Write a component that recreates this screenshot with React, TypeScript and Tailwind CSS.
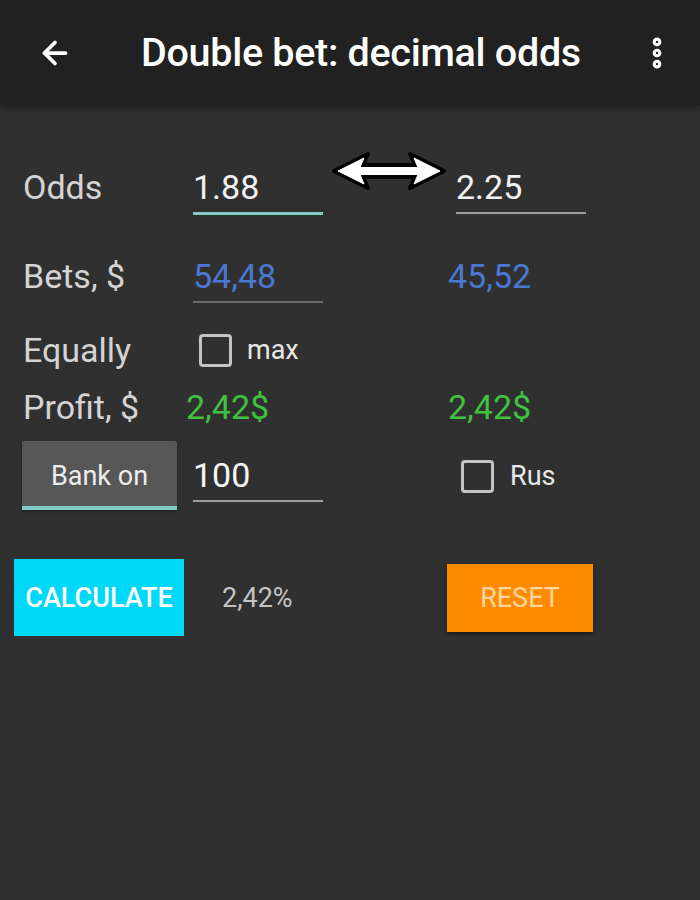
import { ArrowLeft, EllipsisVertical } from 'lucide-react'

const font = { fontFamily: 'Roboto, "Noto Sans", sans-serif' }

function SwapArrow() {
  return (
    <svg width="114" height="40" viewBox="0 0 114 40" className="shrink-0">
      <path
        d="M2 20 L36 3 L31 14 L83 14 L78 3 L112 20 L78 37 L83 26 L31 26 L36 37 Z"
        fill="#000"
        stroke="#000"
        strokeWidth="4"
        strokeLinejoin="round"
      />
      <path
        d="M6 20 L32 7 L28 16.5 L86 16.5 L82 7 L108 20 L82 33 L86 23.5 L28 23.5 L32 33 Z"
        fill="#fff"
        stroke="#fff"
        strokeWidth="1"
        strokeLinejoin="round"
      />
    </svg>
  )
}

function Checkbox() {
  return <span className="w-[33px] h-[33px] border-[3px] border-[#c4c4c4] rounded-[4px] shrink-0" />
}

export default function App() {
  return (
    <div className="min-h-screen bg-[#303030]" style={font}>
      <header className="h-[105px] bg-[#212121] flex items-center shadow-[0_3px_6px_rgba(0,0,0,0.35)] relative">
        <ArrowLeft size={36} strokeWidth={2.5} className="text-white ml-[37px] shrink-0" />
        <h1 className="ml-[68px] text-[39.5px] font-medium text-white tracking-[-0.3px]">
          Double bet: decimal odds
        </h1>
        <EllipsisVertical size={38} strokeWidth={3.5} className="text-white ml-auto mr-[24px]" />
      </header>

      <main className="text-[34px] leading-[36px]">
        <div className="flex items-start pl-[23px] mt-[64px]">
          <span className="w-[170px] text-[#d4d4d4]">Odds</span>
          <div className="w-[130px] pb-[7px] border-b-[3px] border-[#80cbc4] text-[#f2f2f2]">1.88</div>
          <div className="ml-[9px] -mt-[18px]">
            <SwapArrow />
          </div>
          <div className="ml-[10px] w-[130px] pb-[7px] border-b-[2px] border-[#9e9e9e] text-[#f2f2f2]">2.25</div>
        </div>

        <div className="flex items-start pl-[23px] mt-[43px]">
          <span className="w-[170px] text-[#d4d4d4]">Bets, $</span>
          <div className="w-[130px] pb-[7px] border-b-[2px] border-[#6a6a6a] text-[#4a78d0]">54,48</div>
          <div className="ml-[125px] text-[#4a78d0]">45,52</div>
        </div>

        <div className="flex items-center pl-[23px] mt-[29px]">
          <span className="w-[176px] text-[#d4d4d4]">Equally</span>
          <Checkbox />
          <span className="ml-[15px] text-[27px] text-[#e8e8e8]">max</span>
        </div>

        <div className="flex items-start pl-[23px] mt-[21px]">
          <span className="w-[163px] text-[#d4d4d4]">Profit, $</span>
          <div className="w-[262px] text-[#3fc23f]">2,42$</div>
          <div className="text-[#3fc23f]">2,42$</div>
        </div>

        <div className="flex items-start pl-[22px] mt-[16px]">
          <button
            type="button"
            className="w-[155px] h-[69px] pt-[4px] bg-[#575757] border-b-4 border-[#80cbc4] rounded-t-[2px] text-[27px] text-[#eeeeee] shadow-[0_1px_3px_rgba(0,0,0,0.4)]"
          >
            Bank on
          </button>
          <div className="ml-[16px] mt-[16px] w-[130px] pb-[7px] border-b-[2px] border-[#9e9e9e] text-[#f5f5f5]">100</div>
          <div className="ml-[138px] mt-[17px] flex items-center">
            <Checkbox />
            <span className="ml-[16px] text-[27px] text-[#e8e8e8]">Rus</span>
          </div>
        </div>

        <div className="flex items-center pl-[14px] mt-[49px]">
          <button
            type="button"
            className="w-[170px] h-[77px] bg-[#00d8f8] text-white text-[27px] font-medium"
          >
            CALCULATE
          </button>
          <span className="ml-[38px] w-[225px] text-[27px] text-[#c4c4c4]">2,42%</span>
          <button
            type="button"
            className="w-[146px] h-[68px] bg-[#ff8c00] text-[#ffd59e] text-[27px] shadow-[0_2px_4px_rgba(0,0,0,0.5)]"
          >
            RESET
          </button>
        </div>
      </main>
    </div>
  )
}
